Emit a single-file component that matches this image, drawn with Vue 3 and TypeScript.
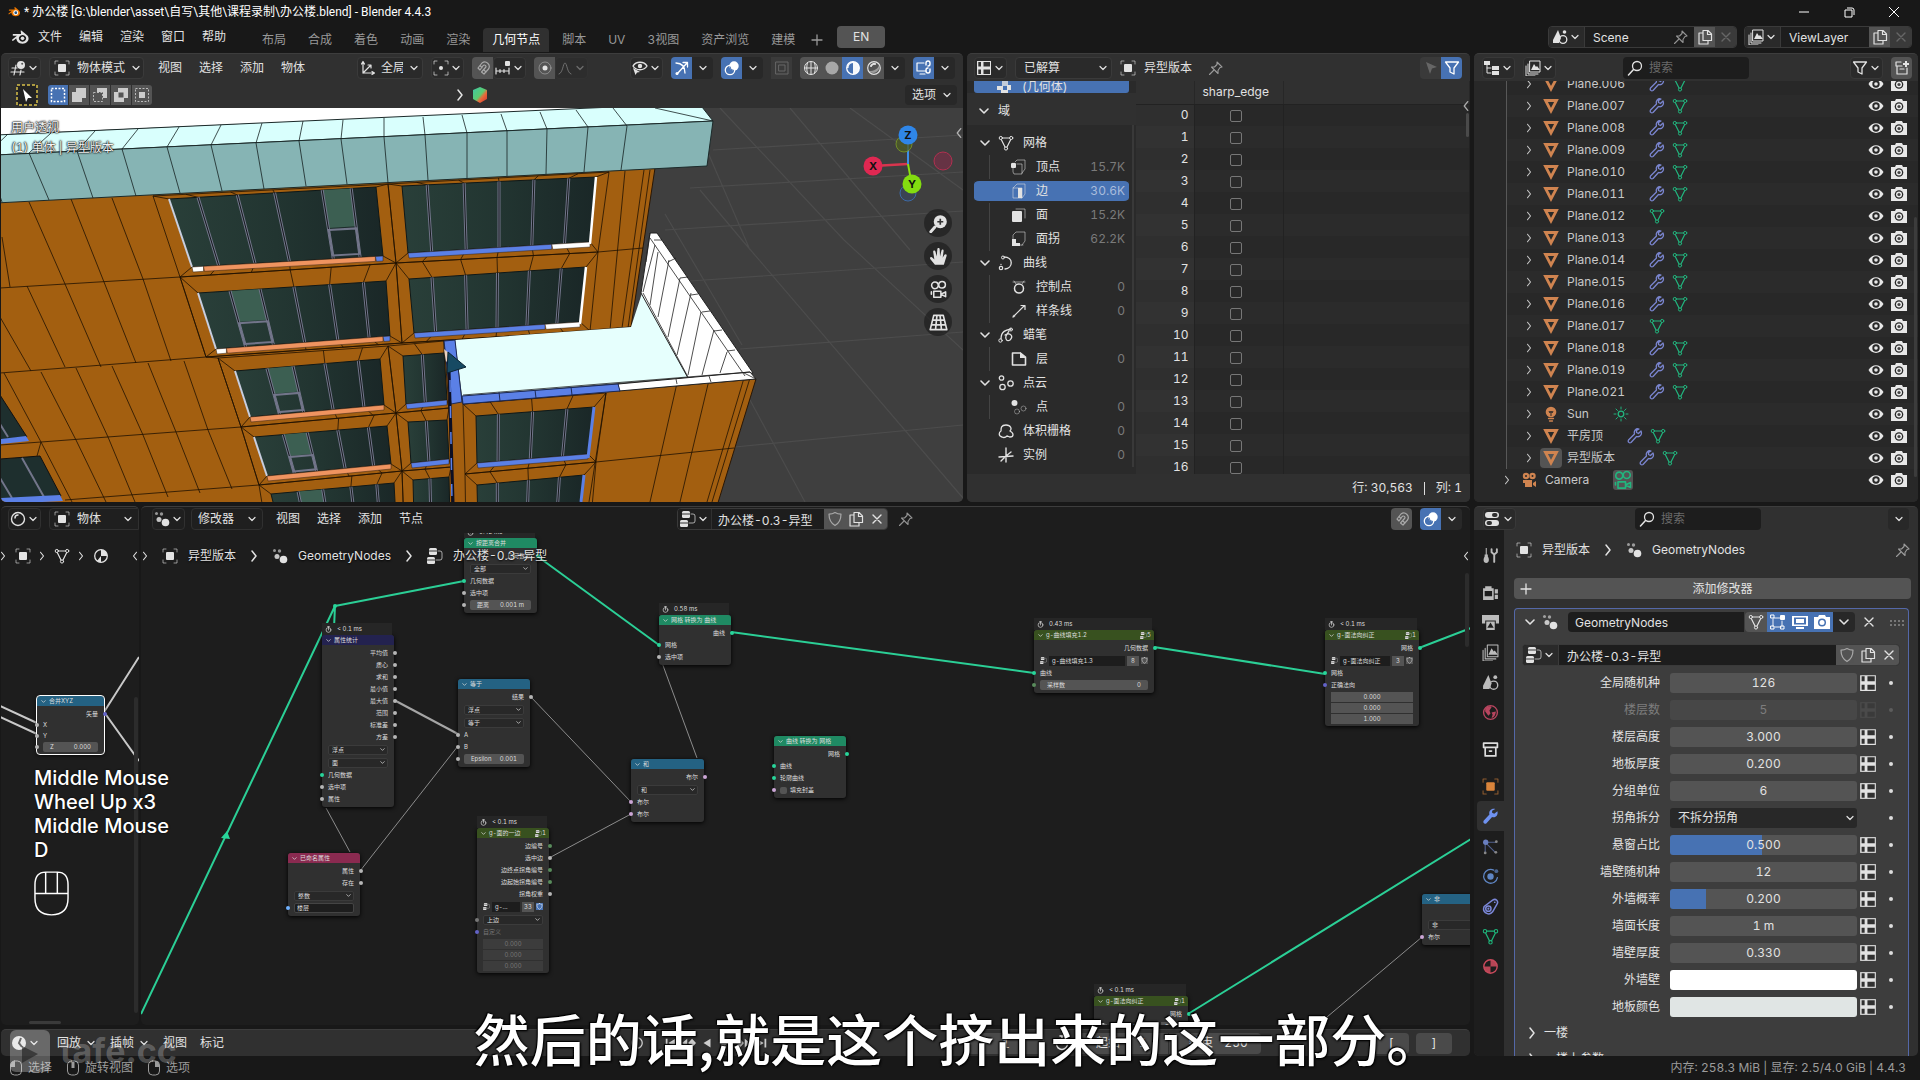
<script setup lang="ts">
import { h, ref } from 'vue'

const O = 'fill="none" stroke="currentColor" stroke-linecap="round" stroke-linejoin="round"'
const icons: Record<string, string> = {
  chev: `<path ${O} stroke-width="1.6" d="M4 6l4 4 4-4"/>`,
  right: `<path ${O} stroke-width="1.5" d="M6 3l4 5-4 5"/>`,
  left: `<path ${O} stroke-width="1.5" d="M10 3L6 8l4 5"/>`,
  x: `<path ${O} stroke-width="1.4" d="M4 4l8 8M12 4l-8 8"/>`,
  plus: `<path ${O} stroke-width="1.3" d="M8 3v10M3 8h10"/>`,
  blender: `<path fill="currentColor" fill-rule="evenodd" d="M8.600 1.600c.6-.4 1 0 1.500.4l4.600 3.900c3 3 .8 7.900-4.300 7.900-4 0-5.900-2.700-5.800-5L1.600 11C.8 11.500 0 10.600.8 9.900l4.300-3.500H1.900c-1.200 0-1-1.700.1-1.700H9zM10.300 5.600a3.400 3.200 0 1 0 .1 0z"/><circle cx="10.400" cy="8.800" r="1.700" fill="currentColor"/>`,
  view3d: `<path ${O} stroke-width="1.2" d="M2 8h5M1 12h13M6 5L4 15M11 10l-1 5"/><circle cx="11" cy="5" r="4" fill="currentColor"/><circle cx="12.200" cy="3.800" r="1" fill="#555"/>`,
  object: `<rect x="4" y="4" width="8" height="8" rx="1" fill="currentColor"/><path ${O} opacity=".6" d="M1 4V1h3M12 1h3v3M15 12v3h-3M4 15H1v-3"/>`,
  orient: `<path ${O} stroke-width="1.2" d="M3 2v11h11M1.500 4L3 1.500 4.500 4M12 11.500l2.500 1.500-2.500 1.500M3 13l7-7M8 5h3v3"/>`,
  pivot: `<circle cx="8" cy="8" r="2" fill="currentColor"/><path ${O} opacity=".7" d="M1 4V1h3M12 1h3v3M15 12v3h-3M4 15H1v-3"/>`,
  magnet: `<path ${O} stroke-width="1.2" d="M3 8l4-5a4.500 4.500 0 0 1 6.500 6L9 14l-2.500-2 4-4.500a1.500 1.500 0 0 0-2.300-2L5 10zM5 5.500L7 7.500M9 10l2 2"/>`,
  snapinc: `<path ${O} stroke-width="1.200" d="M1 8v6M5 9.500v3M9 9.500v3M14 8v6M1 11h13"/><rect x="10" y="1" width="5" height="5" rx="1" fill="currentColor"/>`,
  prop: `<circle cx="8" cy="8" r="6" ${O} opacity=".4"/><circle cx="8" cy="8" r="2.500" fill="currentColor"/>`,
  falloff: `<path ${O} d="M2 14C6 13 6 3 8 3s2 10 6 11"/>`,
  eyeptr: `<path ${O} stroke-width="1.400" d="M1 6c3-5 11-5 14 0-3 5-11 5-14 0z"/><circle cx="8" cy="6" r="2.200" fill="currentColor"/><path fill="currentColor" d="M1 8l7 4-3 .5L3.500 15z"/>`,
  gizmo: `<path ${O} stroke-width="1.300" d="M2 3c6 0 9 4 9 10M3 14L13 3M9 2.500l4.500 0 0 4.500"/><circle cx="3" cy="13.500" r="1.500" fill="currentColor"/>`,
  overlay: `<circle cx="10" cy="6" r="4.700" fill="currentColor"/><circle cx="6" cy="10" r="4.700" ${O} stroke-width="1.300"/><path fill="none" stroke="#4772b3" d="M6 6.500a4 4 0 0 0 4 4"/>`,
  xray: `<rect x="2" y="2" width="12" height="12" ${O}/><rect x="5" y="5" width="6" height="6" ${O}/>`,
  wire: `<circle cx="8" cy="8" r="6.500" ${O}/><path ${O} d="M8 1.500v13M1.500 8h13M4.500 2.500c-1 4-1 7 0 11M11.500 2.500c1 4 1 7 0 11"/>`,
  solid: `<circle cx="8" cy="8" r="6.500" fill="currentColor"/>`,
  mat: `<circle cx="8" cy="8" r="6.300" ${O} stroke-width="1.300"/><path fill="currentColor" d="M8 1.700a6.300 6.300 0 0 1 0 12.600V8H2A6.300 6.300 0 0 1 8 1.700z" opacity=".95"/><path fill="#4772b3" d="M8 8V3a5 5 0 0 0-4.500 5z"/>`,
  rend: `<circle cx="8" cy="8" r="6.300" ${O} stroke-width="1.200"/><path ${O} stroke-width="2" d="M5 6c1-2 3-2.500 4-2"/><path fill="currentColor" opacity=".5" d="M3 11a6 6 0 0 0 10-6c-1 4-5 6-10 6z"/>`,
  screen: `<path ${O} stroke-width="1.200" d="M8 3H1v8h9M4 14h5"/><path ${O} stroke-width="1.400" d="M10 5V3a2 2 0 0 1 4 0v1a2 2 0 0 1-2 2M14 9v2a2 2 0 0 1-4 0v-1a2 2 0 0 1 2-2"/>`,
  sheet: `<path fill="currentColor" d="M1 1h14v14H1z"/><path fill="#303030" d="M7.500 2H14v4.500H7.500zM2.300 2H5v4.500H2.300zM2.300 9.500H5V14H2.300zM7.500 9.500H14V14H7.500z"/>`,
  pin: `<path ${O} stroke-width="1.100" d="M9 2l5 5-2 .5-2 3 0 3-6.500-6.500 3 0 2.500-2.500zM5.500 10.500L1.500 14.500"/>`,
  pointer: `<path fill="currentColor" d="M3 2l11 5-5 1.500L7 14z"/>`,
  filter: `<path ${O} stroke-width="1.300" d="M1.500 2h13L10 8v6l-4-2V8z"/>`,
  outliner: `<path ${O} d="M3 4v9h4M3 8h4"/><rect x="0" y="1" width="6" height="4" fill="currentColor"/><rect x="8" y="6" width="7" height="4" fill="currentColor"/><rect x="8" y="11" width="7" height="4" fill="currentColor"/>`,
  layers: `<path ${O} d="M3 4v10h10M1 6v10h9"/><rect x="5" y="1" width="10" height="11" ${O} /><path fill="currentColor" d="M6 10l3-6 2 3 1-1 3 4z"/>`,
  search: `<circle cx="10" cy="6" r="4.500" ${O} stroke-width="1.300"/><path ${O} stroke-width="1.500" d="M6.500 9.500L1.500 15"/>`,
  newcol: `<path ${O} stroke-width="1.200" d="M7 2H2v4h6M3 6v8h10V8M6 9h4"/><path fill="currentColor" d="M11 1h2v2h2v2h-2v2h-2V5H9V3h2z"/>`,
  scene: `<path fill="currentColor" d="M6 1l3 8-2 5H1l0-3z"/><circle cx="11" cy="10.500" r="3.800" ${O} stroke-width="1.300"/><circle cx="12.500" cy="3" r="1.800" fill="currentColor"/>`,
  copy: `<path ${O} stroke-width="1.200" d="M6 1.500h5l3.500 3.500v6.500H6zM10.500 2v3.500H14M6 4H2v11h9v-3"/>`,
  shield: `<path ${O} stroke-width="1.200" d="M8 1.500c2 1.200 4 1.600 6 1.600 0 6-1.500 9-6 11.500C3.500 12 2 9 2 3.100c2 0 4-.4 6-1.600z"/>`,
  tri: `<path fill="none" stroke="currentColor" stroke-width="2.800" d="M2.500 2.500h11L8 13z"/>`,
  wrench: `<path ${O} stroke-width="1.300" d="M14 3l-2.500 2.500-2-1 0-2L12 1C9 0 6.500 3 7.500 6L1.500 12c-1 2 1 3.500 2.500 2.500l5.500-6C13 9.500 15.500 6.500 14 3z"/>`,
  wrenchfill: `<path fill="currentColor" d="M14.500 3l-3 2.500-2-1 0-2L12.500 1C9 0 6 3 7 6L1.500 12c-1 2 1 3.500 2.500 2.500l5.500-6C13 9.500 15.500 6.500 14.500 3z"/>`,
  mesh: `<path ${O} stroke-width="1.200" d="M4.500 3h7M3.500 5l3.500 7M12.500 5L9 12"/><circle cx="2.800" cy="3" r="1.600" ${O}/><circle cx="13.200" cy="3" r="1.600" ${O}/><circle cx="8" cy="13.500" r="1.600" ${O}/>`,
  bulb: `<circle cx="8" cy="6" r="5.300" fill="currentColor"/><path fill="none" stroke="#282828" d="M6 5l1 2 1-2 1 2 1-2M8 7v3"/><path ${O} stroke-width="1.300" d="M5.500 12.500h5M6.500 15h3"/>`,
  sun: `<circle cx="8" cy="8" r="2.800" ${O} stroke-width="1.300"/><path ${O} d="M8 1v2M8 13v2M1 8h2M13 8h2M3 3l1.500 1.500M11.500 11.500L13 13M13 3l-1.500 1.500M4.500 11.500L3 13"/>`,
  cam: `<circle cx="5" cy="4" r="3.200" fill="currentColor"/><circle cx="11.500" cy="4" r="3.200" fill="currentColor"/><path fill="currentColor" d="M2 8h9v7H4V11H2zM12 11l3-2v6l-3-2z"/><circle cx="5" cy="4" r="1" fill="#282828"/><circle cx="11.500" cy="4" r="1" fill="#282828"/>`,
  camo: `<circle cx="5" cy="4.500" r="2.800" ${O} stroke-width="1.300"/><circle cx="11" cy="4" r="2.800" ${O} stroke-width="1.300"/><path ${O} stroke-width="1.300" d="M4 9.500h6v5H4zM10 12l4-2v4zM2 10v2"/>`,
  eye: `<path fill="currentColor" d="M.5 8C4 1.500 12 1.500 15.500 8 12 14.500 4 14.500.5 8z"/><circle cx="8" cy="8" r="3.700" fill="#282828"/><circle cx="8" cy="8" r="1.800" fill="currentColor"/>`,
  photo: `<path fill="currentColor" d="M0 3h4l1-2h6l1 2h4v12H0z"/><circle cx="8" cy="8.500" r="4.300" fill="#282828"/><circle cx="8" cy="8.500" r="3" fill="currentColor"/><circle cx="8" cy="8.500" r="1.600" fill="#444"/>`,
  photoblue: `<path fill="currentColor" d="M0 3h4l1-2h6l1 2h4v12H0z"/><circle cx="8" cy="8.500" r="4" fill="#4772b3"/><circle cx="8" cy="8.500" r="2.500" fill="currentColor"/>`,
  tools: `<path fill="currentColor" d="M3.500 1h1v6h1v2c1.500 2 1.500 6-1.500 6s-3-4-1.500-6V7h1z"/><path ${O} stroke-width="1.800" d="M9 2v3l2.500 2L14 5V2M11.500 7v7"/>`,
  render: `<path fill="currentColor" d="M1 4h10v11H1zM3 2h6v2H3zM12 5h3v4h-3zM12 10h3v4h-3z"/><path fill="#1d1d1d" d="M2.500 6.500h7v5h-7z"/>`,
  output: `<path fill="currentColor" d="M0 1h16v8h-3V6H3v3H0z"/><path fill="currentColor" d="M4 7h8v8H4z"/><path fill="#1d1d1d" d="M5 13l3-5 3 5z"/>`,
  world: `<circle cx="8" cy="8" r="6.500" ${O} stroke-width="1.300"/><path fill="currentColor" d="M3 4c3-3 6-2 6-1L7 6l1 3-2 2-3-4zM9 8l4-1c0 3-2 6-4 6l1-3z"/>`,
  collection: `<path ${O} stroke-width="1.600" d="M1.500 2h13v4h-13zM3 6v8h10V6"/><path ${O} stroke-width="1.500" d="M7 9.500h2"/>`,
  particles: `<circle cx="3.500" cy="4" r="2.500" fill="currentColor"/><path ${O} opacity=".7" d="M4 4h9M4 5l8 8M3 6v7"/><circle cx="13.500" cy="3.500" r="1.300" fill="#888"/><circle cx="13" cy="13.500" r="1.300" fill="#888"/><circle cx="3" cy="14" r="1.300" fill="#888"/>`,
  physics: `<circle cx="8" cy="8" r="3" fill="currentColor"/><path ${O} stroke-width="1.200" d="M11 2a6.500 6.500 0 1 0 3.500 7"/><circle cx="13.500" cy="3" r="1.800" fill="currentColor" opacity=".7"/>`,
  constraint: `<path ${O} stroke-width="1.400" d="M2 8L10 2c3-2 6 1 4 4l-4 7c-3 4-9 1-8.500-3z"/><circle cx="6" cy="10" r="2.500" ${O} stroke-width="1.400"/><circle cx="6" cy="10" r="1" fill="currentColor"/><circle cx="12" cy="4" r=".8" fill="currentColor"/>`,
  material: `<circle cx="8" cy="8" r="6.300" ${O} stroke-width="1.300"/><path fill="currentColor" d="M8 8V1.700a6.300 6.300 0 0 1 6.300 6.300H8zM8 8v6.300A6.300 6.300 0 0 1 1.700 8z" opacity=".9"/>`,
  matball: `<circle cx="8" cy="8" r="6.300" ${O} stroke-width="1.300"/><path fill="currentColor" d="M8 1.700a6.300 6.300 0 0 1 6.300 6.300H8zM8 8v6.300A6.300 6.300 0 0 1 4 13z"/>`,
  shader: `<circle cx="8" cy="8" r="6.500" ${O} stroke-width="1.400"/><path ${O} stroke-width="1.500" d="M5 7c0-2 1-3 3-3"/>`,
  geo: `<circle cx="11.500" cy="11.500" r="3.800" fill="currentColor"/><circle cx="5" cy="8.500" r="2.500" fill="currentColor" opacity=".85"/><circle cx="7.500" cy="3" r="1.700" fill="currentColor" opacity=".6"/><circle cx="2.500" cy="2.500" r="1.500" fill="currentColor" opacity=".6"/>`,
  geoset: `<path fill="currentColor" opacity=".8" d="M6 0h6v7H6z"/><path fill="currentColor" d="M1 7h6v4H1zM5 11h7v3H5zM11 6h4v5h-4z"/>`,
  tree: `<rect x="2" y="0" width="8" height="7" rx="1.500" fill="currentColor"/><rect x="0" y="9" width="8" height="7" rx="1.500" fill="currentColor"/><path ${O} opacity=".7" d="M11 3h2q2 0 2 2v5q0 2-2 2H9"/><path stroke="#333" d="M2 3h8M0 12h8"/>`,
  props: `<rect x="0" y="1" width="14" height="6" rx="3" fill="currentColor"/><rect x="0" y="9" width="14" height="6" rx="3" fill="currentColor"/><rect x="7" y="2" width="5.500" height="4" rx="2" fill="#303030"/><rect x="1.500" y="10" width="5.500" height="4" rx="2" fill="#303030"/>`,
  vertex: `<path ${O} opacity=".55" d="M2 4v9l1 2h8V5H6M4 3l2-2h8v9l-3 4"/><rect x="0" y="4" width="5" height="5" rx="1" fill="currentColor"/>`,
  edge: `<path ${O} opacity=".55" d="M2 5v10h9V5H2l4-4h8v10l-3 4"/><rect x="7" y="5" width="4" height="10" fill="currentColor"/>`,
  face: `<path ${O} opacity=".55" d="M5 2h9v9"/><rect x="1" y="4" width="10" height="11" rx="1" fill="currentColor"/>`,
  corner: `<path ${O} opacity=".55" d="M2 8V4l3-3h9v9l-3 4M8 14h4"/><path fill="currentColor" d="M1 8h4v4h4v3H1z"/>`,
  curve: `<path ${O} stroke-width="1.300" d="M6 2c10 0 9 11 1 12M3 9.500v0"/><circle cx="5" cy="2.500" r="1.500" ${O}/><circle cx="3" cy="13" r="1.700" ${O} stroke-width="1.200"/>`,
  ctrl: `<circle cx="8" cy="9.500" r="4.500" ${O} stroke-width="1.500"/><path ${O} opacity=".6" d="M2 3h12M3 2l2 3M13 2l-2 3"/>`,
  spline: `<path ${O} stroke-width="1.200" d="M2 14L13 3M10 2.500h4v4M6 10h0"/><circle cx="3" cy="13" r="1.300" fill="currentColor" opacity=".6"/>`,
  gp: `<path ${O} stroke-width="1.300" d="M3 12C3 4 8 3 13 2M7 8c5-3 9 1 5 5-3 2-5-1-4-4l3-5"/><circle cx="2.500" cy="13.500" r="1.700" ${O}/><circle cx="13" cy="2.500" r="1.500" ${O}/>`,
  layer: `<path ${O} stroke-width="1.600" d="M1.500 2h8l5 4v8h-13z"/><path fill="currentColor" d="M9 1l6 6H9z"/>`,
  pcloud: `<circle cx="3.500" cy="3" r="2.200" ${O} stroke-width="1.300"/><circle cx="4.500" cy="12" r="2.700" ${O} stroke-width="1.300"/><circle cx="12.500" cy="8.500" r="2.700" ${O} stroke-width="1.300"/>`,
  point: `<circle cx="3.500" cy="4" r="3" fill="currentColor"/><circle cx="6" cy="12.500" r="2.500" ${O} opacity=".4"/><circle cx="12.500" cy="9.500" r="2.500" ${O} opacity=".4"/>`,
  volume: `<path ${O} stroke-width="1.300" d="M4 14c-4-1-3-5-1-6-0-3 0-6 5-6s6 4 4 6c4 2 4 6 0 6-1 0-2-1-3-1-1 1-3 2-5 1z"/>`,
  inst: `<path ${O} stroke-width="1.400" d="M8 1v14M1 10l14-1M8 9l5-4M8 9l-5 5"/>`,
  editmode: `<path ${O} opacity=".9" d="M3 5v7M5 13h6M12 7v5M4 4h6"/><rect x="10" y="1" width="5" height="5" rx="1" fill="currentColor"/><rect x="1" y="1" width="3" height="3" ${O}/><rect x="1" y="12" width="3" height="3" ${O}/><rect x="11" y="12" width="3" height="3" ${O}/>`,
  monitor: `<path fill="currentColor" d="M0 2h16v10H0zM4 13h8v2H4z"/><path fill="#4772b3" d="M2 3.500h12v7H2z"/><path fill="currentColor" d="M4 5h8v4H4z"/>`,
  clock: `<circle cx="8" cy="8" r="7" fill="currentColor"/><path fill="none" stroke="#303030" stroke-width="2" d="M10 3L8 8l3 4"/>`,
  stop: `<circle cx="8" cy="9" r="5.500" ${O} stroke-width="1.500"/><path ${O} stroke-width="1.500" d="M6 1h4M8 2v7"/>`,
  zoom: `<circle cx="9.500" cy="6.500" r="5.500" fill="currentColor"/><path fill="none" stroke="#333" stroke-width="1.400" d="M9.500 4v5M7 6.500h5"/><path ${O} stroke-width="2.400" d="M5 11l-3.500 4"/>`,
  hand: `<path fill="currentColor" d="M5 15L1 10c-.5-1.500 1-2 2-1l1.500 1.500L3.500 4c0-1.500 1.700-1.500 2 0L6.500 8 7 2c0-1.500 2-1.500 2 0l.3 6 1.200-5c.4-1.300 2-1 1.800.4L11.500 9l1.500-2.500c1-1 2.200-.3 1.800 1L12.500 15z"/>`,
  persp: `<path ${O} stroke-width="1.400" d="M4 2h8l3 12H1zM3 6h10M2 10h12M6.700 2L5.500 14M9.300 2l1.200 12"/>`,
  autokey: `<circle cx="8" cy="8" r="6" ${O} stroke-width="1.500"/>`,
  first: `<path fill="currentColor" d="M2 3h2v10H2zM13 3v10L5 8z"/>`,
  prevkey: `<path fill="currentColor" d="M6 3v10L0 8zM11.500 3L16 8l-4.500 5L7 8z"/>`,
  playback: `<path fill="currentColor" d="M12 3v10L4 8z"/>`,
  play: `<path fill="currentColor" d="M4 3v10l8-5z"/>`,
  nextkey: `<path fill="currentColor" d="M10 3v10l6-5zM4.500 3L0 8l4.500 5L9 8z"/>`,
  last: `<path fill="currentColor" d="M12 3h2v10h-2zM3 3v10l8-5z"/>`,
  mouseL: `<rect x="2.500" y="1" width="11" height="14" rx="4" ${O}/><path fill="currentColor" d="M3 7V4q0-3 4-3v6z"/>`,
  mouseM: `<rect x="2.500" y="1" width="11" height="14" rx="4" ${O}/><path fill="currentColor" d="M6.500 2h3v6h-3z"/>`,
  mouseR: `<rect x="2.500" y="1" width="11" height="14" rx="4" ${O}/><path fill="currentColor" d="M13 7V4q0-3-4-3v6z"/>`,
}
const Icon = (p: { name: string }) =>
  h('svg', { viewBox: '0 0 16 16', class: 'ico', 'aria-hidden': 'true', innerHTML: icons[p.name] })
Icon.props = ['name']

const menus = ['文件', '编辑', '渲染', '窗口', '帮助']
const tabs = ['布局', '合成', '着色', '动画', '渲染', '几何节点', '脚本', 'UV', '3视图', '资产浏览', '建模']
const activeTab = ref('几何节点')
const transport = ['autokey', 'first', 'prevkey', 'playback', 'play', 'nextkey', 'last']

/* ---------- 3D viewport ---------- */
type Pt = [number, number]
type Quad = [Pt, Pt, Pt, Pt]
interface Win { q: Quad; o?: Quad; m: number[]; c?: [number, number]; s: [string, number, number][]; edge?: string }
const BLUE = '#5b80e6', SAL = '#ef9460', WHT = '#fff'
const at = (q: Quad, u: number, v: number): Pt => {
  const t: Pt = [q[0][0] + (q[1][0] - q[0][0]) * u, q[0][1] + (q[1][1] - q[0][1]) * u]
  const b: Pt = [q[3][0] + (q[2][0] - q[3][0]) * u, q[3][1] + (q[2][1] - q[3][1]) * u]
  return [t[0] + (b[0] - t[0]) * v, t[1] + (b[1] - t[1]) * v]
}
const poly = (p: Pt[]) => 'M' + p.map(a => a[0].toFixed(1) + ' ' + a[1].toFixed(1)).join('L') + 'Z'
const line = (a: Pt, b: Pt) => `M${a[0].toFixed(1)} ${a[1].toFixed(1)}L${b[0].toFixed(1)} ${b[1].toFixed(1)}`
const sub = (q: Quad, u0: number, u1: number, v0: number, v1: number) => poly([at(q, u0, v0), at(q, u1, v0), at(q, u1, v1), at(q, u0, v1)])
const sillPath = (q: Quad, a: number, b: number) => {
  const p = at(q, a, 1), r = at(q, b, 1)
  return poly([p, r, [r[0], r[1] + 5], [p[0] + 1, p[1] + 5]])
}
const frameLines = (w: Win) => {
  if (!w.o) return ''
  const o = w.o
  let d = poly(o)
  const cs: Pt[] = [[0, 0], [1, 0], [1, 1], [0, 1]]
  cs.forEach(c => { d += line(at(o, c[0], c[1]), at(w.q, c[0], c[1])) })
  w.m.forEach(u => { d += line(at(o, u, 0), at(w.q, u, 0)) + line(at(w.q, u, 1), at(o, u, 1)) })
  return d
}
const mull = (w: Win) => w.m.concat(w.c ?? []).map(u => line(at(w.q, u, 0), at(w.q, u, 1))).join('')
const five = [.13, .32, .5, .68, .86]
const wins: Win[] = [
  { q: [[169, 199], [376, 187], [383, 256], [192, 267]], o: [[153, 196], [388, 184], [396, 263], [180, 277]], m: [.14, .33, .51], c: [.74, .88], s: [[WHT, 0, .06], [SAL, .06, .96], [BLUE, .96, 1]], edge: '#c9cede' },
  { q: [[402, 186], [596, 177], [590, 242], [408, 253]], o: [[388, 184], [609, 172], [598, 252], [396, 263]], m: five, s: [[BLUE, 0, .79], [WHT, .79, 1]] },
  { q: [[198, 293], [386, 281], [390, 336], [216, 349]], o: [[180, 277], [396, 263], [402, 343], [206, 357]], m: [.51, .7, .88], c: [.17, .33], s: [[WHT, 0, .06], [SAL, .06, .96], [BLUE, .96, 1]], edge: '#c9cede' },
  { q: [[409, 279], [586, 267], [580, 322], [414, 333]], o: [[396, 263], [598, 252], [590, 331], [402, 343]], m: five, s: [[BLUE, 0, .79], [WHT, .79, 1]] },
  { q: [[235, 371], [380, 359], [384, 405], [250, 417]], o: [[218, 358], [388, 346], [396, 413], [241, 427]], m: [.62, .85], c: [.22, .4], s: [[SAL, 0, 1]], edge: '#c9cede' },
  { q: [[403, 356], [444, 353], [447, 400], [406, 404]], o: [[388, 346], [444, 341], [449, 408], [396, 413]], m: [.47], s: [[BLUE, 0, 1]] },
  { q: [[254, 437], [387, 426], [391, 464], [267, 476]], o: [[241, 427], [396, 413], [402, 471], [259, 485]], m: [.63, .86], c: [.22, .4], s: [[SAL, 0, 1]], edge: '#c9cede' },
  { q: [[408, 422], [447, 420], [449, 459], [411, 463]], o: [[396, 413], [449, 408], [451, 467], [402, 471]], m: [.47], s: [[BLUE, 0, 1]] },
  { q: [[476, 416], [594, 407], [588, 454], [477, 463]], o: [[463, 404], [606, 393], [596, 462], [465, 474]], m: [.19, .48, .77], s: [[BLUE, 0, 1]] },
  { q: [[271, 494], [394, 483], [396, 520], [280, 530]], o: [[259, 485], [402, 471], [404, 525], [268, 540]], m: [.65, .86], c: [.22, .42], s: [] },
  { q: [[413, 480], [449, 477], [450, 520], [414, 520]], o: [[402, 471], [451, 467], [452, 530], [404, 530]], m: [.47], s: [] },
  { q: [[477, 485], [584, 475], [580, 520], [478, 525]], o: [[465, 474], [596, 462], [590, 530], [466, 535]], m: [.19, .48, .77], s: [] },
]
const roofTop: Pt[] = [[8, 134], [51, 133], [95, 131], [138, 129], [179, 127], [221, 125], [262, 123], [303, 121], [343, 120], [384, 118], [423, 117], [462, 115], [501, 114], [540, 112], [576, 110], [613, 108]]
const roofMid: Pt[] = [[-14, 155], [29, 153], [77, 151], [122, 149], [167, 147], [211, 145], [256, 143], [299, 141], [341, 139], [384, 137], [425, 135], [467, 133], [507, 131], [547, 129], [588, 127], [627, 126]]
const roofLow: Pt[] = [[2, 202], [49, 200], [93, 198], [136, 196], [180, 193], [222, 191], [264, 189], [306, 186], [347, 184], [388, 183], [428, 180], [467, 178], [507, 176], [546, 174], [584, 172], [621, 170]]
const roofLines = roofTop.map((p, i) => line(p, roofMid[i]) + line(roofMid[i], roofLow[i])).join('')
const wallLines = 'M2 237L10 287M29 202L65 284M71 199L104 282M112 198L143 279M0 288L180 277M27 286L65 367M65 284L101 367M104 282L136 363M143 279L171 361M180 277L206 357M0 317L31 371M0 373L206 357L218 358M4 373L41 442L72 502M41 372L76 440L106 502M76 368L108 437L135 502M112 366L143 435L168 497M148 363L176 432L200 493M184 361L208 430L232 489M218 358L241 427L259 485M41 442L241 427M65 500L259 485M41 442L37 456M0 445L41 442M598 252L643 248M625 171L610 330M644 170L622 328M650 170L628 328M606 393L589 502M596 462L734 448M677 383L650 502M709 380L680 502M744 378L707 502M750 378L712 502M465 345L445 346M206 357L402 343L590 331L631 327'
const slats = 'M658 252L650 305M669 260L658 317M680 278L668 337M691 293L677 355M701 312L688 375M714 330L702 375M727 352L720 373M650 238L745 376M654 240L662 240M668 262L676 258M680 278L688 277M691 295L698 294M702 312L710 311M714 331L722 330M727 351L735 350M650 233L646 262M655 245L643 292M463 395L750 372M643 293L688 377'

/* ---------- spreadsheet ---------- */
interface Dom { d: number; i: string; t: string; n?: string; sel?: boolean; open?: boolean }
const domains: Dom[] = [
  { d: 0, i: 'mesh', t: '网格', open: true }, { d: 1, i: 'vertex', t: '顶点', n: '15.7K' }, { d: 1, i: 'edge', t: '边', n: '30.6K', sel: true },
  { d: 1, i: 'face', t: '面', n: '15.2K' }, { d: 1, i: 'corner', t: '面拐', n: '62.2K' },
  { d: 0, i: 'curve', t: '曲线', open: true }, { d: 1, i: 'ctrl', t: '控制点', n: '0' }, { d: 1, i: 'spline', t: '样条线', n: '0' },
  { d: 0, i: 'gp', t: '蜡笔', open: true }, { d: 1, i: 'layer', t: '层', n: '0' },
  { d: 0, i: 'pcloud', t: '点云', open: true }, { d: 1, i: 'point', t: '点', n: '0' },
  { d: 0, i: 'volume', t: '体积栅格', n: '0' }, { d: 0, i: 'inst', t: '实例', n: '0' },
]
const rows = Array.from({ length: 17 }, (_, i) => i)

/* ---------- outliner ---------- */
interface Obj { t: string; i: string; e: string[]; cls?: string }
const planes = ['006', '007', '008', '009', '010', '011', '012', '013', '014', '015', '016', '017', '018', '019', '021']
const objects: Obj[] = [
  ...planes.map(n => ({ t: 'Plane.' + n, i: 'tri', e: n === '012' || n === '017' ? ['mesh'] : ['wrench', 'mesh'] })),
  { t: 'Sun', i: 'bulb', e: ['sun'] },
  { t: '平房顶', i: 'tri', e: ['wrench', 'mesh'] },
  { t: '异型版本', i: 'tri', e: ['wrench', 'mesh'], cls: 'active' },
  { t: 'Camera', i: 'cam', e: ['camo'], cls: 'root' },
]

/* ---------- properties ---------- */
const ptabs = [
  { i: 'tools', c: '#bbb', g: 1 }, { i: 'render', c: '#bbb' }, { i: 'output', c: '#bbb' }, { i: 'layers', c: '#bbb' }, { i: 'scene', c: '#bbb' }, { i: 'world', c: '#b8455f', g: 1 },
  { i: 'collection', c: '#ddd', g: 1 }, { i: 'object', c: '#d9843b' }, { i: 'wrenchfill', c: '#6f92f0', a: 1 }, { i: 'particles', c: '#6a7fc0' },
  { i: 'physics', c: '#5f86c4' }, { i: 'constraint', c: '#7b87d8' }, { i: 'mesh', c: '#1fb57b' }, { i: 'material', c: '#c94a5c' },
]
interface Prop { l: string; v: string; k?: 'choice' | 'colour' | 'muted'; f?: number }
const propRows: Prop[] = [
  { l: '全局随机种', v: '126' }, { l: '楼层数', v: '5', k: 'muted' }, { l: '楼层高度', v: '3.000' }, { l: '地板厚度', v: '0.200' },
  { l: '分组单位', v: '6' }, { l: '拐角拆分', v: '不拆分拐角', k: 'choice' }, { l: '悬窗占比', v: '0.500', f: 49 }, { l: '墙壁随机种', v: '12' },
  { l: '外墙概率', v: '0.200', f: 19 }, { l: '墙面长度', v: '1 m' }, { l: '墙壁厚度', v: '0.330' }, { l: '外墙壁', v: '#ffffff', k: 'colour' }, { l: '地板颜色', v: '#e0e5e4', k: 'colour' },
]
const fill = (p: Prop) => (p.f ? { background: `linear-gradient(90deg,#4772b3 ${p.f}%,#545454 ${p.f}%)` } : {})

/* ---------- node editor ---------- */
interface Row { k: 'out' | 'in' | 'pick' | 'num' | 'group' | 'vec' | 'chk' | 'txt'; t: string; v?: string; s?: string; dim?: boolean }
interface NodeT { x: number; y: number; w: number; t: string; c: string; ms?: string; g?: string; r: Row[]; sel?: boolean }
const G = '#28d59a', F = '#b5b5b5', V = '#6363c7', B = '#cca6d6'
const TEAL = '#1f8a63', MATH = '#246283', GRP = '#38511f'
const out = (t: string, s = F): Row => ({ k: 'out', t, s })
const inp = (t: string, s = F): Row => ({ k: 'in', t, s })
const pick = (t: string): Row => ({ k: 'pick', t })
const view = { x: 141, y: 506 }
const nodes: NodeT[] = [
  { x: 464, y: 538, w: 73, t: '按距离合并', c: TEAL, ms: '0.42 ms', r: [out('几何数据', G), pick('全部'), inp('几何数据', G), inp('选中项'), { k: 'num', t: '距离', v: '0.001 m', s: F }] },
  { x: 322, y: 635, w: 72, t: '属性统计', c: '#23224f', ms: '< 0.1 ms', r: ['平均值', '质心', '求和', '最小值', '最大值', '范围', '标准差', '方差'].map(t => out(t)).concat([pick('浮点'), pick('面'), inp('几何数据', G), inp('选中项'), inp('属性')]) },
  { x: 458, y: 679, w: 72, t: '等于', c: MATH, r: [out('结果'), pick('浮点'), pick('等于'), inp('A'), inp('B'), { k: 'num', t: 'Epsilon', v: '0.001', s: F }] },
  { x: 288, y: 853, w: 72, t: '已命名属性', c: '#8a2a50', r: [out('属性'), out('存在'), pick('整数'), { k: 'txt', t: '楼层', s: '#70b2ff' }] },
  { x: 477, y: 828, w: 72, t: 'g-面的一边', c: GRP, ms: '< 0.1 ms', g: '1', r: [out('边编号', '#598c5c'), out('选中边'), out('边终点拐角编号', '#598c5c'), out('边起始拐角编号', '#598c5c'), out('拐角权重'), { k: 'group', t: 'g-…', v: '33', s: '' }, { k: 'pick', t: '上边', s: '#777' }, { k: 'in', t: '自定义', s: V, dim: true }, { k: 'vec', t: '0.000', dim: true }, { k: 'vec', t: '0.000', dim: true }, { k: 'vec', t: '0.000', dim: true }] },
  { x: 631, y: 759, w: 73, t: '和', c: MATH, r: [out('布尔', B), pick('和'), inp('布尔', B), inp('布尔', B)] },
  { x: 659, y: 615, w: 72, t: '网格 转换为 曲线', c: TEAL, ms: '0.58 ms', r: [out('曲线', G), inp('网格', G), inp('选中项')] },
  { x: 774, y: 736, w: 72, t: '曲线 转换为 网格', c: TEAL, r: [out('网格', G), inp('曲线', G), inp('轮廓曲线', G), { k: 'chk', t: '填充封盖', s: B }] },
  { x: 1034, y: 630, w: 120, t: 'g-曲线填充1.2', c: GRP, ms: '0.43 ms', g: '5', r: [out('几何数据', G), { k: 'group', t: 'g-曲线填充1.3', v: '8' }, inp('曲线', G), { k: 'num', t: '采样数', v: '0', s: '#598c5c' }] },
  { x: 1325, y: 630, w: 94, t: 'g-面法向纠正', c: GRP, ms: '< 0.1 ms', g: '1', r: [out('网格', G), { k: 'group', t: 'g-面法向纠正', v: '3' }, inp('网格', G), inp('正确法向', V), { k: 'vec', t: '0.000' }, { k: 'vec', t: '0.000' }, { k: 'vec', t: '1.000' }] },
  { x: 1422, y: 894, w: 72, t: '非', c: MATH, r: [out('布尔', B), pick('非'), inp('布尔', B)] },
  { x: 1094, y: 996, w: 94, t: 'g-面法向纠正', c: GRP, ms: '< 0.1 ms', g: '1', r: [out('网格', G), { k: 'group', t: 'g-面法向纠正', v: '3' }] },
]
const mini: NodeT[] = [{ x: 37, y: 696, w: 67, t: '合并XYZ', c: MATH, sel: true, r: [out('矢量', V), inp('X'), inp('Y'), { k: 'num', t: 'Z', v: '0.000', s: F }] }]
const editors = [{ id: 'mini', v: { x: 1, y: 506 }, n: mini }, { id: 'main', v: view, n: nodes }]
const green = 'M335 606L464 581M335 606L141 1014M335 606L334 628M537 556L659 645M731 632L1034 673M1154 647L1325 674M1419 648L1471 628M1188 1014L1471 839'
const gray = 'M394 700L458 734M360 871L458 746M530 696L631 802M549 858L631 814M326 808L350 852M661 660L697 758M1327 1017L1422 937'
</script>

<template>
  <div class="app">
    <header class="title">
      <svg class="logo" viewBox="0 0 16 16" aria-hidden="true"><path fill="#ea7600" d="M8.600 1.600c.6-.4 1 0 1.500.4l4.600 3.900c3 3 .8 7.900-4.300 7.900-4 0-5.900-2.700-5.800-5L1.600 11C.8 11.500 0 10.600.8 9.900l4.300-3.500H1.900c-1.200 0-1-1.700.1-1.700H9z" /><circle cx="10.300" cy="9" r="3.300" fill="#fff" /><circle cx="10.400" cy="9" r="1.900" fill="#265787" /></svg>
      <span>* 办公楼 [G:\blender\asset\自写\其他\课程录制\办公楼.blend] - Blender 4.4.3</span>
      <div class="wc">
        <button aria-label="最小化"><svg viewBox="0 0 12 12"><path d="M1 6h10" /></svg></button>
        <button aria-label="还原"><svg viewBox="0 0 12 12"><path d="M2 4h7v7H2zM4 2h5q2 0 2 2v5" /></svg></button>
        <button aria-label="关闭"><svg viewBox="0 0 12 12"><path d="M1 1l10 10M11 1L1 11" /></svg></button>
      </div>
    </header>

    <nav class="top">
      <button class="plain logo2" aria-label="Blender"><Icon name="blender" /></button>
      <div class="menus"><button v-for="m in menus" :key="m" class="plain">{{ m }}</button></div>
      <div class="tabs">
        <button v-for="(t, i) in tabs" :key="i" :class="{ current: t === activeTab }" @click="activeTab = t">{{ t }}</button>
        <button class="add" aria-label="添加工作区"><Icon name="plus" /></button>
      </div>
      <button class="en">EN</button>
      <div class="idb scene">
        <button class="dd" aria-label="场景"><Icon name="scene" /><Icon name="chev" class="s" /></button>
        <input value="Scene" aria-label="场景名称"><Icon name="pin" class="dimi inpin" />
        <button class="t" aria-label="新建场景"><Icon name="copy" /></button><button class="t off" aria-label="删除场景"><Icon name="x" /></button>
      </div>
      <div class="idb vl">
        <button class="dd" aria-label="视图层"><Icon name="layers" /><Icon name="chev" class="s" /></button>
        <input value="ViewLayer" aria-label="视图层名称">
        <button class="t" aria-label="新建视图层"><Icon name="copy" /></button><button class="t off" aria-label="删除视图层"><Icon name="x" /></button>
      </div>
    </nav>

    <main>
      <div class="colL">
        <div class="rowT">
          <section class="area view3d">
            <div class="hd">
              <button class="dd ed" aria-label="编辑器类型"><Icon name="view3d" /><Icon name="chev" class="s" /></button>
              <label class="sel mode"><Icon name="object" /><select aria-label="模式"><option>物体模式</option></select><Icon name="chev" class="s" /></label>
              <div class="menus"><button v-for="m in ['视图', '选择', '添加', '物体']" :key="m" class="plain">{{ m }}</button></div>
              <label class="sel orient"><Icon name="orient" /><select aria-label="坐标系"><option>全局</option></select><Icon name="chev" class="s" /></label>
              <button class="dd" aria-label="轴心点"><Icon name="pivot" /><Icon name="chev" class="s" /></button>
              <div class="grp"><button class="t" aria-label="吸附"><Icon name="magnet" class="dimi" /></button><button class="dd" aria-label="吸附到"><Icon name="snapinc" /><Icon name="chev" class="s" /></button></div>
              <div class="grp"><button class="t" aria-label="衰减编辑"><Icon name="prop" /></button><button class="dd faint" aria-label="衰减"><Icon name="falloff" /><Icon name="chev" class="s" /></button></div>
              <div class="rightg">
                <button class="dd" aria-label="可见性"><Icon name="eyeptr" /><Icon name="chev" class="s" /></button>
                <div class="grp"><button class="t on" aria-label="显示控件"><Icon name="gizmo" /></button><button class="c" aria-label="控件"><Icon name="chev" class="s" /></button></div>
                <div class="grp"><button class="t on" aria-label="显示叠加层"><Icon name="overlay" /></button><button class="c" aria-label="叠加层"><Icon name="chev" class="s" /></button></div>
                <button class="t off" aria-label="透视模式"><Icon name="xray" /></button>
                <div class="grp"><button class="t" aria-label="线框"><Icon name="wire" /></button><button class="t" aria-label="实体"><Icon name="solid" class="dimi" /></button><button class="t on" aria-label="材质预览"><Icon name="mat" /></button><button class="t" aria-label="渲染"><Icon name="rend" /></button><button class="c" aria-label="着色方式"><Icon name="chev" class="s" /></button></div>
                <div class="grp"><button class="t on" aria-label="同步"><Icon name="screen" /></button><button class="c" aria-label="同步选项"><Icon name="chev" class="s" /></button></div>
              </div>
            </div>
            <div class="tool">
              <button class="ts" aria-label="框选工具"><svg viewBox="0 0 22 22"><rect x="1" y="1" width="20" height="20" fill="#222" stroke="#d8c04a" stroke-dasharray="3 2" stroke-width="1.500" /><path d="M7 5l9 9h-4l-2 4z" fill="#fff" /></svg></button>
              <div class="modes">
                <button class="chosen" aria-label="设置"><svg viewBox="0 0 16 16"><rect x="1.500" y="1.500" width="13" height="13" fill="none" stroke="#fff" stroke-dasharray="2 1.500" stroke-width="1.500" /></svg></button>
                <button aria-label="扩展"><svg viewBox="0 0 16 16"><path fill="#ccc" d="M5 1h10v10h-4v4H1V5h4z" /></svg></button>
                <button aria-label="减去"><svg viewBox="0 0 16 16"><path fill="#ccc" d="M5 1h10v10h-4V5H5z" /><rect x="1.500" y="5.500" width="9" height="9" fill="none" stroke="#bbb" stroke-dasharray="2 1.500" /></svg></button>
                <button aria-label="反转"><svg viewBox="0 0 16 16"><path fill="#ccc" fill-rule="evenodd" d="M5 1h10v10h-4v4H1V5h4zM5.500 5.500v5h5v-5z" /></svg></button>
                <button aria-label="交集"><svg viewBox="0 0 16 16"><rect x="5" y="5" width="6" height="6" fill="#ccc" /><rect x="1.500" y="1.500" width="13" height="13" fill="none" stroke="#bbb" stroke-dasharray="2 1.500" /></svg></button>
              </div>
              <div class="hex"><Icon name="right" /><svg class="hx" viewBox="0 0 18 18" aria-hidden="true"><defs><linearGradient id="hx" x1="0" y1="0" x2="1" y2="1"><stop offset="0" stop-color="#3ec7a5" /><stop offset=".5" stop-color="#5ccc70" /><stop offset=".65" stop-color="#e86b3a" /><stop offset="1" stop-color="#d12f2f" /></linearGradient></defs><path fill="url(#hx)" d="M9 1l7 3v9l-7 4-7-4V4z" /></svg></div>
              <button class="opt">选项<Icon name="chev" class="s" /></button>
            </div>
            <div class="canvas">
              <svg class="scene3d" viewBox="1 108 962 394" preserveAspectRatio="xMinYMin slice" role="img" aria-label="办公楼模型">
                <defs><linearGradient id="glass"><stop offset="0" stop-color="#293f39" /><stop offset=".5" stop-color="#223531" /><stop offset="1" stop-color="#1a2727" /></linearGradient></defs>
                <rect x="1" y="108" width="962" height="394" fill="#3f3f3f" />
                <path stroke="#4c4c4c" stroke-width="1.200" fill="none" d="M713 150L963 135M690 188L963 172M665 230L963 211M690 281L963 262M740 349L963 332M735 447L963 425M700 134L750 250M665 214L742 345M742 240L963 498M844 240L963 350M750 400L805 502M720 108L844 240M790 108L910 250M850 108L963 190M700 190L742 240" />
                <path fill="#a35f10" stroke="#2a1705" d="M-5 200L655 168L631 327L444 341L463 404L756 379L717 506L-5 506Z" />
                <path fill="#fff" d="M1 108H613L8 134L1 136Z" />
                <path fill="#d9fffd" stroke="#1c2a2a" d="M-4 135L613 107L702 107L713 121L-4 155Z" />
                <path fill="#86b4b4" stroke="#1c2a2a" d="M-4 155L713 121L707 166L-4 203Z" />
                <path class="wirel" stroke="#162222" :d="roofLines + 'M655 108L713 121'" />
                <path class="wirel" stroke="#201203" :d="wallLines" />
                <g v-for="(w, i) in wins" :key="i">
                  <path v-if="w.o" class="wirel" stroke="#201203" :d="frameLines(w)" />
                  <path fill="url(#glass)" stroke="#0f1818" :d="poly(w.q)" />
                  <path v-if="w.c" fill="#3c5f52" :d="sub(w.q, w.c[0], w.c[1], 0, .55)" />
                  <path fill="none" stroke="#72758a" stroke-width="3" :d="mull(w)" />
                  <path fill="none" stroke="#14181c" :d="mull(w)" />
                  <path v-if="w.c" fill="none" stroke="#72758a" stroke-width="2" :d="sub(w.q, w.c[0], w.c[1], .58, .95)" />
                  <path v-if="w.edge" fill="none" :stroke="w.edge" stroke-width="2" :d="line(w.q[0], w.q[3])" />
                  <path v-for="(s, j) in w.s" :key="j" :fill="s[0]" stroke="#332216" stroke-width=".5" :d="sillPath(w.q, s[1], s[2])" />
                </g>
                <path stroke="#fff" stroke-width="2.500" d="M596 177L590 244M586 267L580 324" />
                <path stroke="#5b80e6" stroke-width="3" d="M594 407L588 458M584 475L581 502" />
                <path fill="#1e2f2e" stroke="#111" d="M0 395L27 437L0 440ZM0 459L40 456L61 496L0 499Z" />
                <path stroke="#72758a" stroke-width="2" d="M0 424L8 437M22 458L44 497M0 478L12 498" />
                <path fill="#5b80e6" d="M0 439L26 436L29 441L0 444ZM0 498L60 495L63 501L0 504Z" />
                <path fill="#e6fffd" d="M455 340L631 327L643 290L690 377L462 396Z" />
                <path fill="#fff" stroke="#222" d="M641 293L650 233L657 233L753 373L688 378Z" />
                <path fill="#fff" stroke="#222" d="M618 384L750 372L756 379L619 391Z" />
                <path class="wirel" stroke="#222" :d="slats + 'M676 379L677 384M709 376L711 382M744 373L756 379'" />
                <path fill="#5b80e6" stroke="#1d2a55" d="M462 396L618 384L620 391L463 404ZM444 341L455 340L462 402L451 404Z" />
                <path stroke="#1d2a55" d="M499 392L500 401M535 390L536 398M571 387L572 395" />
                <path stroke="#0c0f24" stroke-width="3" d="M449 370L453 502" /><path stroke="#5b80e6" stroke-width="1.500" stroke-dasharray="12 14" d="M450 380L452 502" />
                <path fill="#e9d3c0" d="M444 349L452 356L446 362Z" /><path fill="#174a63" stroke="#0c2230" d="M448 352L466 367L447 373Z" />
                <g>
                  <path stroke="#ff3352" stroke-width="2.500" d="M873 166L908 164" opacity=".8" /><path stroke="#8be10f" stroke-width="2" d="M908 164L911 180" /><path stroke="#3d8ee8" stroke-width="2" d="M908 164V135" />
                  <circle cx="904" cy="144" r="8" fill="#4c5a26" stroke="#7fa023" opacity=".8" /><circle cx="908" cy="193" r="8" fill="#3a4453" stroke="#3d6aa5" /><circle cx="943" cy="161" r="9" fill="#663344" stroke="#b23050" />
                  <circle cx="908" cy="135" r="9.500" fill="#2f86e8" /><circle cx="873" cy="166" r="9.500" fill="#e02852" /><circle cx="912" cy="184" r="9.500" fill="#83dd10" />
                  <g class="axis"><text x="908" y="139">Z</text><text x="873" y="170">X</text><text x="912" y="188">Y</text></g>
                </g>
              </svg>
              <div class="vtext"><span>用户透视</span><span>(1) 单体 | 异型版本</span></div>
              <div class="nav"><button v-for="n in ['zoom', 'hand', 'camo', 'persp']" :key="n" :aria-label="n"><Icon :name="n" /></button></div>
              <Icon name="left" class="fold" />
            </div>
          </section>

          <section class="area spread">
            <div class="hd">
              <button class="dd ed" aria-label="编辑器类型"><Icon name="sheet" /><Icon name="chev" class="s" /></button>
              <label class="sel solved"><select aria-label="状态"><option>已解算</option></select><Icon name="chev" class="s" /></label>
              <Icon name="object" /><span class="nm">异型版本</span><Icon name="pin" class="dimi" />
              <div class="grp rightg"><button class="t off" aria-label="仅选中项"><Icon name="pointer" /></button><button class="t on" aria-label="过滤"><Icon name="filter" /></button></div>
            </div>
            <div class="sbody">
              <aside>
                <div class="geo"><Icon name="geoset" /><span>(几何体)</span></div>
                <div class="dom"><Icon name="chev" />域</div>
                <ul>
                  <li v-for="d in domains" :key="d.t" :class="{ picked: d.sel, sub: d.d }"><Icon v-if="!d.d" name="chev" :class="{ hid: !d.open }" /><Icon :name="d.i" /><span>{{ d.t }}</span><em>{{ d.n }}</em></li>
                </ul>
              </aside>
              <div class="sheet">
                <table>
                  <thead><tr><th></th><th>sharp_edge</th><th></th></tr></thead>
                  <tbody><tr v-for="r in rows" :key="r"><td>{{ r }}</td><td><input type="checkbox" :aria-label="'sharp_edge ' + r"></td><td></td></tr></tbody>
                </table>
                <Icon name="left" class="fold" /><i class="thumb"></i>
              </div>
            </div>
            <footer><span>行: 30,563</span><span class="bar"></span><span>列: 1</span></footer>
          </section>
        </div>

        <div class="rowN">
          <section v-for="e in editors" :key="e.id" class="area nodeed" :class="e.id">
            <div class="space">
              <svg v-if="e.id === 'main'" class="links" aria-hidden="true" viewBox="141 506 1330 519" preserveAspectRatio="xMinYMin slice">
                <path :d="gray" stroke="#8c8c8c" fill="none" /><path d="M394 700L458 734" stroke="#a5a5a5" stroke-width="2" />
                <path :d="green" stroke="#2bcf96" stroke-width="2" fill="none" /><circle cx="335" cy="606" r="2" fill="#28d59a" /><path fill="#28d59a" d="M227 831L221 838L230 839Z" />
              </svg>
              <svg v-else class="links" aria-hidden="true" viewBox="1 506 138 519" preserveAspectRatio="xMinYMin slice"><path fill="none" stroke="#c8c8c8" stroke-width="2" d="M0 706L37 723M0 717L37 734M104 712L139 657M104 712L139 761" /></svg>
              <div v-for="(n, i) in e.n" :key="i" class="node" :class="{ active: n.sel }" :style="{ left: n.x - e.v.x + 'px', top: n.y - e.v.y + 'px', width: n.w + 'px' }">
                <div v-if="n.ms" class="ms"><Icon name="stop" />{{ n.ms }}</div>
                <div class="nh" :style="{ background: n.c }"><Icon name="chev" />{{ n.t }}<span v-if="n.g" class="gb"><Icon name="tree" /><i>{{ n.g }}</i></span></div>
                <div v-for="(r, j) in n.r" :key="j" class="nr" :class="[r.k, { dim: r.dim }]">
                  <b v-if="r.s" class="sk" :style="{ background: r.s }"></b>
                  <template v-if="r.k === 'pick'"><select :aria-label="n.t"><option>{{ r.t }}</option></select><Icon name="chev" class="nc" /></template>
                  <template v-else-if="r.k === 'group'"><Icon name="tree" /><span class="gn">{{ r.t }}</span><span class="gu">{{ r.v }}</span><Icon name="shield" class="gs" :class="{ lit: r.v === '33' }" /></template>
                  <button v-else-if="r.k === 'num'" class="nf"><span>{{ r.t }}</span><span>{{ r.v }}</span></button>
                  <button v-else-if="r.k === 'vec'" class="nf mid">{{ r.t }}</button>
                  <input v-else-if="r.k === 'txt'" class="nt" :value="r.t" :aria-label="n.t">
                  <label v-else-if="r.k === 'chk'"><input type="checkbox">{{ r.t }}</label>
                  <span v-else>{{ r.t }}</span>
                </div>
              </div>
            </div>
            <template v-if="e.id === 'mini'">
              <div class="hd"><button class="dd ed" aria-label="编辑器类型"><Icon name="shader" /><Icon name="chev" class="s" /></button><label class="sel grow"><Icon name="object" /><select aria-label="着色器类型"><option>物体</option></select><Icon name="chev" class="s" /></label></div>
              <div class="crumb"><Icon name="right" class="s" /><Icon name="object" /><Icon name="right" class="s" /><Icon name="mesh" /><Icon name="right" class="s" /><Icon name="matball" /><Icon name="left" class="s" /></div>
              <i class="vbar"></i><i class="hbar"></i>
            </template>
            <template v-else>
              <div class="hd">
                <button class="dd ed" aria-label="编辑器类型"><Icon name="geo" /><Icon name="chev" class="s" /></button>
                <label class="sel modi"><select aria-label="节点类型"><option>修改器</option></select><Icon name="chev" class="s" /></label>
                <div class="menus"><button v-for="m in ['视图', '选择', '添加', '节点']" :key="m" class="plain">{{ m }}</button></div>
                <div class="idb tree"><button class="dd" aria-label="节点树"><Icon name="tree" /><Icon name="chev" class="s" /></button><input value="办公楼-0.3-异型" aria-label="节点树名称"><button class="t" aria-label="伪用户"><Icon name="shield" class="dimi" /></button><button class="t" aria-label="复制"><Icon name="copy" /></button><button class="t" aria-label="断开"><Icon name="x" /></button></div>
                <Icon name="pin" class="dimi" />
                <div class="rightg"><button class="t" aria-label="吸附"><Icon name="magnet" class="dimi" /></button><div class="grp"><button class="t on" aria-label="叠加层"><Icon name="overlay" /></button><button class="c" aria-label="叠加层选项"><Icon name="chev" class="s" /></button></div></div>
              </div>
              <div class="crumb"><Icon name="right" class="s" /><Icon name="object" /><span>异型版本</span><Icon name="right" /><Icon name="geo" /><span>GeometryNodes</span><Icon name="right" /><Icon name="tree" /><span>办公楼-0.3-异型</span><Icon name="left" class="s end" /></div>
              <i class="vbar short"></i>
            </template>
          </section>
        </div>

        <section class="area tl">
          <button class="dd" aria-label="时间线"><Icon name="clock" /><Icon name="chev" class="s" /></button>
          <button class="plain">回放<Icon name="chev" class="s" /></button><button class="plain">插帧<Icon name="chev" class="s" /></button><button class="plain">视图</button><button class="plain">标记</button>
          <div class="play"><button v-for="b in transport" :key="b" :aria-label="b"><Icon :name="b" /></button></div>
          <input class="fr" value="1" aria-label="当前帧"><Icon name="stop" />
          <label class="rng">起始<input value="1"></label><label class="rng e">结束<input value="250"></label>
          <button class="br b1">[</button><button class="br">]</button>
        </section>
      </div>

      <div class="colR">
        <section class="area outl">
          <div class="hd">
            <button class="dd" aria-label="编辑器类型"><Icon name="outliner" /><Icon name="chev" class="s" /></button><button class="dd" aria-label="显示模式"><Icon name="layers" /><Icon name="chev" class="s" /></button>
            <label class="find"><Icon name="search" /><input placeholder="搜索" aria-label="搜索"></label>
            <button class="dd f" aria-label="过滤"><Icon name="filter" /><Icon name="chev" class="s" /></button><button class="t" aria-label="新建集合"><Icon name="newcol" /></button>
          </div>
          <div class="olwrap">
            <ul>
              <li v-for="o in objects" :key="o.t" :class="o.cls"><Icon name="right" class="s" /><span class="oi"><Icon :name="o.i" /></span><span class="oname">{{ o.t }}</span><Icon v-for="x in o.e" :key="x" :name="x" :class="'e-' + x" /><span class="vis"><Icon name="eye" /><Icon name="photo" /></span></li>
            </ul>
            <i class="thumb low"></i>
          </div>
        </section>

        <section class="area prop">
          <div class="hd"><button class="dd" aria-label="编辑器类型"><Icon name="props" /><Icon name="chev" class="s" /></button><label class="find"><Icon name="search" /><input placeholder="搜索" aria-label="搜索属性"></label><button class="c last" aria-label="选项"><Icon name="chev" class="s" /></button></div>
          <div class="pb">
            <div class="pt"><button v-for="p in ptabs" :key="p.i" :class="{ current: p.a, g: p.g }" :style="{ color: p.c }" :aria-label="p.i"><Icon :name="p.i" /></button></div>
            <div class="pc">
              <div class="pcr"><Icon name="object" /><span>异型版本</span><Icon name="right" /><Icon name="geo" /><span>GeometryNodes</span><Icon name="pin" class="dimi end" /></div>
              <button class="addm"><Icon name="plus" /><span>添加修改器</span></button>
              <div class="panel">
                <div class="mh"><Icon name="chev" /><Icon name="geo" /><input value="GeometryNodes" aria-label="修改器名称"><div class="grp"><button class="t" aria-label="笼架"><Icon name="mesh" /></button><button class="t on" aria-label="编辑模式"><Icon name="editmode" /></button><button class="t on" aria-label="实时"><Icon name="monitor" /></button><button class="t on" aria-label="渲染"><Icon name="photoblue" /></button><button class="c" aria-label="更多"><Icon name="chev" /></button></div><button class="plain" aria-label="移除"><Icon name="x" /></button><span class="drag"></span></div>
                <div class="idb nt2"><button class="dd" aria-label="节点组"><Icon name="tree" /><Icon name="chev" class="s" /></button><input value="办公楼-0.3-异型" aria-label="节点组名称"><button class="t" aria-label="伪用户"><Icon name="shield" class="dimi" /></button><button class="t" aria-label="复制"><Icon name="copy" /></button><button class="t" aria-label="断开"><Icon name="x" /></button></div>
                <div v-for="p in propRows" :key="p.l" class="pr" :class="p.k">
                  <label :for="p.l">{{ p.l }}</label>
                  <span v-if="p.k === 'choice'" class="psel"><select :id="p.l"><option>{{ p.v }}</option></select><Icon name="chev" class="s" /></span>
                  <input v-else-if="p.k === 'colour'" :id="p.l" type="color" :value="p.v">
                  <input v-else :id="p.l" :value="p.v" :style="fill(p)" :disabled="p.k === 'muted'">
                  <button v-if="p.k !== 'choice'" class="plain" aria-label="属性切换"><Icon name="sheet" /></button><span v-else class="ph"></span><i class="dot"></i>
                </div>
                <button class="subp"><Icon name="right" />一楼</button>
                <button class="subp"><Icon name="right" />一楼上参数</button>
              </div>
            </div>
          </div>
        </section>
      </div>
    </main>

    <footer class="status">
      <span><Icon name="mouseL" />选择</span><span><Icon name="mouseM" />旋转视图</span><span><Icon name="mouseR" />选项</span>
      <span class="mem">内存: 258.3 MiB | 显存: 2.5/4.0 GiB | 4.4.3</span>
    </footer>

    <div class="mark"><svg viewBox="0 0 40 42" aria-hidden="true"><rect width="40" height="42" rx="6" fill="#fff" opacity=".28" /><path d="M12 16l16 8-16 9z" fill="#1d1d1d" opacity=".6" /></svg><span>tafe.cc</span></div>
    <div class="keys"><p>Middle Mouse</p><p>Wheel Up x3</p><p>Middle Mouse</p><p>D</p><svg viewBox="0 0 36 46" aria-hidden="true"><path fill="none" stroke="#fff" stroke-width="1.500" d="M1 14Q1 1 12 1H24Q35 1 35 14V28Q35 45 18 45T1 28ZM1 23H35M12 1V23M24 1V23" /></svg></div>
    <p class="subtitle">然后的话,就是这个挤出来的这一部分。</p>
  </div>
</template>

<style>
html, body { margin: 0; background: #181818; overflow: hidden; }
svg.ico { width: 16px; height: 16px; flex: none; display: block; }
</style>

<style scoped>
.app { height: 100vh; display: flex; flex-direction: column; position: relative; background: #181818; color: #e2e2e2; font: 12px/16px Inter, "Noto Sans CJK SC", sans-serif; font-variant-numeric: tabular-nums; overflow: hidden; }
.app * { box-sizing: border-box; }
button, input, select { font: inherit; font-variant-numeric: tabular-nums; color: inherit; border: 0; padding: 0; margin: 0; background: none; outline: 0; min-width: 0; }
select { appearance: none; }
button { display: flex; align-items: center; justify-content: center; white-space: nowrap; }
ul { list-style: none; margin: 0; padding: 0; }
p { margin: 0; }
.s.ico { width: 12px; height: 12px; }
.dimi { opacity: .6; }
.title { height: 22px; flex: none; display: flex; align-items: center; padding: 2px 14px 0 8px; font: 12px/18px Roboto, "Noto Sans CJK SC", sans-serif; color: #fff; gap: 4px; }
.logo { width: 12px; height: 14px; }
.wc { margin-left: auto; display: flex; gap: 33px; padding-right: 6px; }
.wc svg { width: 12px; height: 12px; fill: none; stroke: #fff; }
.top { height: 31px; flex: none; display: flex; align-items: center; padding: 0 8px 1px 10px; }
.logo2 .ico { width: 20px; height: 17px; }
.menus { display: flex; gap: 17px; margin-left: 14px; }
.top > .menus { margin-left: 8px; }
.tabs { display: flex; align-self: flex-end; margin-left: 25px; color: #999; }
.tabs button { height: 24px; padding: 0 11px; border-radius: 4px 4px 0 0; }
.tabs .current { background: #303030; color: #fff; padding: 0 9px; margin: 0 2px; }
.tabs .add { padding: 0 3px; }
.en { width: 48px; height: 22px; background: #545454; border-radius: 4px; margin-left: 9px; }
.idb { display: flex; height: 22px; background: #1d1d1d; border-radius: 4px; border: 1px solid #3a3a3a; overflow: hidden; align-items: center; }
.idb input { flex: 1; padding-left: 8px; height: 20px; }
.scene { width: 189px; margin-left: auto; }
.vl { width: 168px; margin-left: 7px; }
.inpin { margin-right: 5px; }
.idb .dd { width: 36px; height: 20px; border: 0; border-right: 1px solid #3a3a3a; border-radius: 0; }
.t { width: 21px; height: 22px; background: #545454; flex: none; }
.t.on { background: #4772b3; color: #fff; }
.t.off { background: #3a3a3a; color: #666; }
.c { width: 21px; height: 22px; background: #282828; }
.dd { height: 22px; min-width: 33px; background: #2a2a2a; border: 1px solid #383838; border-radius: 4px; gap: 1px; flex: none; }
.faint { opacity: .35; }
.grp { display: flex; border-radius: 4px; overflow: hidden; flex: none; }
.sel { position: relative; display: flex; align-items: center; height: 22px; background: #2a2a2a; border: 1px solid #3a3a3a; border-radius: 4px; padding: 0 4px; gap: 7px; flex: none; }
.sel select { flex: 1; }
.mode { width: 95px; }
.mode select { flex: none; width: 50px; }
.mode .s { margin-left: -4px; }
.solved .s { margin-right: -2px; }
.orient { width: 66px; margin-left: 44px; padding: 0 2px; gap: 5px; }
.solved { width: 97px; padding-left: 8px; }

main { flex: 1; min-height: 0; display: grid; grid-template-columns: minmax(0, 1fr) 444px; gap: 4px; padding: 0 2px 0 1px; }
.colL, .colR { display: flex; flex-direction: column; gap: 4px; min-width: 0; min-height: 0; }
.rowT { display: grid; grid-template-columns: minmax(0, 1fr) 503px; gap: 4px; height: 449px; flex: none; }
.rowN { flex: 1; min-height: 0; display: grid; grid-template-columns: 138px minmax(0, 1fr); gap: 2px; }
.area { background: #303030; border-radius: 5px; overflow: hidden; display: flex; flex-direction: column; position: relative; min-height: 0; border-top: 1px solid #3d3d3d; }
.hd { height: 27px; flex: none; display: flex; align-items: center; gap: 8px; padding: 0 8px 0 7px; }
.view3d .hd .menus { margin-left: 6px; }
.rightg { margin-left: auto; display: flex; gap: 8px; }
.spread .rightg { gap: 0; }
.tool { height: 27px; flex: none; display: flex; align-items: center; padding: 0 6px 0 15px; position: relative; }
.ts svg { width: 22px; height: 22px; }
.modes { display: flex; margin-left: 10px; border-radius: 3px; overflow: hidden; gap: 1px; }
.modes button { width: 20px; height: 20px; background: #545454; }
.modes .chosen { background: #4772b3; }
.modes svg { width: 16px; height: 16px; }
.hex { flex: 1; display: flex; align-items: center; gap: 3px; justify-content: center; padding-right: 115px; }
.hex .hx { width: 18px; height: 18px; }
.opt { background: #282828; border-radius: 4px; height: 20px; padding: 0 4px 0 7px; gap: 5px; }
.canvas { flex: 1; position: relative; min-height: 0; }
.scene3d { position: absolute; inset: 0; width: 100%; height: 100%; }
.wirel { fill: none; stroke-width: .8; }
.axis text { font: 700 11px Inter, sans-serif; fill: #111; text-anchor: middle; }
.vtext { position: absolute; left: 10px; top: 12px; display: flex; flex-direction: column; gap: 4px; color: #f4f4f4; text-shadow: 0 0 1px #000, 0 0 2px #000, 0 0 2px #333; }
.nav { position: absolute; right: 11px; top: 101px; display: flex; flex-direction: column; gap: 5px; }
.nav button { width: 28px; height: 28px; border-radius: 14px; background: rgba(30, 30, 30, .7); }
.nav .ico { width: 19px; height: 19px; }
.fold.ico { position: absolute; right: -3px; top: 18px; width: 14px; height: 14px; opacity: .7; }
.thumb { position: absolute; right: 1px; top: 32px; width: 3px; height: 24px; border-radius: 2px; background: #4a4a4a; }
.thumb.low { top: 136px; height: 260px; background: #3c3c3c; }

.nm { margin-right: 8px; }
.sbody { flex: 1; display: grid; grid-template-columns: 169px minmax(0, 1fr); min-height: 0; overflow: hidden; }
aside { padding: 0 7px; background: #2a2a2a; }
.geo { height: 12px; background: #4772b3; overflow: hidden; display: flex; align-items: center; gap: 10px; padding-left: 22px; margin-bottom: 2px; border-radius: 0 0 3px 3px; }
.dom { margin: -2px -7px 0; height: 32px; background: #303030; display: flex; align-items: center; gap: 6px; padding: 4px 9px 0; }
aside ul { padding-top: 6px; border-right: 2px solid #393939; margin-right: -5px; padding-right: 3px; }
aside li { height: 24px; display: flex; align-items: center; padding: 0 4px 0 3px; gap: 5px; line-height: 20px; }
aside li span { margin-left: 4px; }
aside li em { margin-left: auto; font-style: normal; color: #7a7a7a; }
aside li.sub { padding-left: 21px; margin-left: 15px; position: relative; border-left: 1px solid #444; }
aside li.picked { background: #4772b3; border: solid #2a2a2a; border-width: 2px 0; border-radius: 5px; margin-left: 0; padding-left: 37px; }
aside li.picked em { color: #a9bcdc; }
.hid { visibility: hidden; }
.sheet { position: relative; overflow: hidden; }
table { width: 100%; border-collapse: collapse; table-layout: fixed; }
th { height: 23px; padding: 0 0 1px; line-height: 18px; font-weight: 400; background: #303030; border-right: 1px solid #272727; border-bottom: 1px solid #222; }
th:first-child { width: 58px; }
th:nth-child(2) { width: 89px; text-align: left; padding-left: 8px; }
td { height: 22px; padding: 0 5px 0 0; text-align: right; background: #282828; border-right: 1px solid #222; }
td:nth-child(2) { text-align: center; padding: 0 6px 0 0; }
td:first-child { background: #2f2f2f; }
tr:nth-child(even) td { background: #2b2b2b; }
tr:nth-child(even) td:first-child { background: #323232; }
td input, .chk input { appearance: none; width: 12px; height: 12px; border: 1px solid #777; border-radius: 2px; vertical-align: middle; }
.spread footer { height: 28px; flex: none; display: flex; justify-content: flex-end; align-items: center; padding: 0 8px 0 0; background: #303030; gap: 11px; }
.bar { width: 1px; height: 13px; background: #ddd; }

.outl { height: 449px; flex: none; }
.outl .hd { padding: 0 6px 0 8px; }
.find { display: flex; align-items: center; gap: 6px; background: #1d1d1d; border-radius: 4px; height: 22px; width: 126px; padding-left: 4px; }
.find input { width: 90px; }
.find input::placeholder { color: #6a6a6a; }
.outl .find { margin-left: 59px; }
.outl .f { margin-left: auto; }
.outl .t { border-radius: 4px; }
.olwrap { flex: 1; overflow: hidden; background: #282828; position: relative; min-height: 0; }
.outl ul { margin-top: -8px; }
.outl li { height: 22px; display: flex; align-items: center; margin-left: 32px; padding: 0 11px 0 16px; border-left: 1px solid #585858; color: #c8c8c8; }
.outl li:nth-child(even) { background: #2b2b2b; }
.outl li .s { margin-right: 5px; }
.oi { width: 22px; height: 20px; display: grid; place-items: center; border-radius: 4px; color: #d08450; }
.outl .active .oi { background: #545454; }
.oname { margin: 0 24px 0 5px; }
.outl li > .ico + .ico { margin-left: 7px; }
.e-wrench { color: #7a85cf; }
.e-mesh, .e-sun, .e-camo { color: #22b57e; }
.outl li.root { border: 0; margin-left: 20px; padding-left: 7px; }
.root .e-camo { background: #545454; border-radius: 3px; width: 20px; height: 20px; }
.vis { margin-left: auto; display: flex; gap: 7px; color: #e8e8e8; }

.prop { flex: 1; }
.prop .hd { padding: 0 9px 0 9px; height: 23px; }
.prop .find { margin-left: 111px; }
.last { margin-left: auto; border-radius: 4px; }
.pb { flex: 1; display: grid; grid-template-columns: 30px minmax(0, 1fr); min-height: 0; }
.pt { background: #1d1d1d; padding: 10px 0 0 3px; }
.pt button { width: 27px; height: 30px; border-radius: 4px 0 0 4px; }
.pt .ico { width: 17px; height: 17px; }
.pt .g { margin-bottom: 7px; }
.pt .current { background: #303030; }
.pc { padding: 0 7px 0 10px; display: flex; flex-direction: column; min-width: 0; min-height: 0; }
.pcr { height: 36px; flex: none; display: flex; align-items: center; gap: 10px; padding-left: 2px; margin-top: 2px; }
.end { margin-left: auto; }
.addm { height: 21px; flex: none; margin: 10px 0 9px; background: #545454; border-radius: 4px; display: flex; padding-left: 4px; }
.addm span { flex: 1; text-align: center; }
.panel { flex: 1; min-height: 0; overflow: hidden; background: #3d3d3d; border: 1px solid #5468a8; border-bottom: 0; border-radius: 4px 4px 0 0; padding: 2px 8px 0 7px; margin-right: 2px; }
.mh { display: flex; height: 22px; align-items: center; gap: 4px; margin-bottom: 11px; }
.mh input { flex: 1; background: #1d1d1d; height: 20px; padding-left: 7px; margin: 0 -3px 0 6px; border-radius: 4px 0 0 4px; }
.mh .t, .mh .c { height: 20px; width: 22px; }
.mh .plain { width: 20px; }
.drag { width: 16px; height: 7px; margin-left: 6px; background: radial-gradient(#777 1px, transparent 1px) 0 0 / 4px 4px; margin-right: -5px; }
.nt2 { margin-bottom: 3px; }
.pr { display: flex; height: 27px; align-items: center; }
.pr label { flex: 1; text-align: right; padding-right: 10px; }
.pr input, .psel { width: 187px; height: 20px; background: #545454; border-radius: 3px; text-align: center; flex: none; }
.pr .plain { width: 22px; }
.pr .plain .ico { width: 18px; height: 18px; }
.ph { width: 22px; }
.psel { display: flex; align-items: center; background: #282828; padding: 0 1px 0 8px; }
.psel select { flex: 1; }
.pr input[type=color] { appearance: none; background: none; overflow: hidden; }
.pr input::-webkit-color-swatch-wrapper { padding: 0; }
.pr input::-webkit-color-swatch { border: 0; }
.dot { width: 4px; height: 4px; border-radius: 2px; background: #ddd; margin: 0 7px 0 10px; }
.pr.muted { color: #7d7d7d; }
.pr.muted input { background: #474747; }
.pr.muted .plain, .pr.muted .dot { opacity: .2; }
.subp { height: 26px; gap: 4px; padding-left: 2px; }

.nodeed { background: #1d1d1d; }
.nodeed .hd { height: 24px; position: relative; }
.nodeed .dd, .nodeed .sel { background: #1f1f1f; border-color: #303030; }
.mini .hd { padding-right: 0; }
.grow { flex: 1; border-radius: 4px 0 0 4px; }
.main .hd { gap: 6px; padding: 0 8px 0 11px; }
.modi { width: 72px; padding-left: 6px; }
.main .menus { margin-left: 7px; }
.tree { width: 211px; margin-left: 248px; }
.nodeed .tree .dd { width: 34px; min-width: 0; }
.tree input { padding-left: 6px; }
.main .hd > .dimi { margin-left: 4px; }
.main .rightg .t { border-radius: 4px; }
.main .rightg .grp .t { border-radius: 0; }
.crumb { position: relative; height: 50px; display: flex; align-items: center; gap: 11px; padding-right: 2px; text-shadow: 0 1px 2px #000; }
.main .crumb { gap: 10px; padding-left: 1px; }
.mini .crumb { gap: 9px; overflow: hidden; }
.crumb .s { margin: 0 -3px 0 -4px; }
.main .crumb .s:first-child { margin: 0 1px 0 -3px; }
.main .crumb .end { margin: 0 -4px 0 auto; }
.mini .crumb .s:last-child { margin: 0 -4px 0 auto; }
.space { position: absolute; inset: 26px 0 0; overflow: hidden; }
.space > * { translate: 0 -27px; }
.links { position: absolute; left: 0; top: 0; width: 100%; height: calc(100% + 27px); }
.vbar { position: absolute; right: 1px; top: 190px; bottom: 12px; width: 4px; background: #2c2c2c; border-radius: 2px; }
.vbar.short { top: 66px; bottom: auto; height: 74px; }
.hbar { position: absolute; left: 28px; bottom: 1px; width: 32px; height: 3px; background: #3a3a3a; border-radius: 2px; }
.node { position: absolute; background: #303030; border-radius: 3px; box-shadow: 0 1px 4px #000; font-size: 6px; line-height: 10px; padding-bottom: 2px; color: #ddd; }
.node.active { outline: 1px solid #fff; }
.mini .nr { height: 11px; }
.ms { position: absolute; bottom: 100%; left: 0; right: 2px; height: 12px; background: #262626; display: flex; align-items: center; gap: 5px; padding-left: 3px; }
.node .ico { width: 7px; height: 7px; }
.nh { height: 10px; display: flex; align-items: center; gap: 2px; padding: 0 3px; border-radius: 3px 3px 0 0; margin-bottom: 2px; white-space: nowrap; }
.gb { margin-left: auto; display: flex; align-items: center; }
.gb i { font-style: normal; }
.nr { position: relative; height: 12px; display: flex; align-items: center; padding: 0 6px; white-space: nowrap; }
.nr.out { justify-content: flex-end; }
.sk { position: absolute; left: -2px; width: 4px; height: 4px; border-radius: 2px; }
.out .sk { left: auto; right: -3px; }
.nr.pick { height: 13px; }
.nr.pick select { flex: 1; height: 10px; background: #282828; border: 1px solid #3b3b3b; padding-left: 3px; border-radius: 2px; line-height: 8px; }
.nc { position: absolute; right: 8px; }
.nf { flex: 1; height: 10px; background: #545454; border-radius: 2px; padding: 0 7px; justify-content: space-between; }
.nf.mid { justify-content: center; border-radius: 0; }
.nr.vec { height: 11px; }
.nt { flex: 1; width: 100%; height: 10px; background: #1d1d1d; border: 1px solid #444; padding-left: 2px; border-radius: 2px; }
.nr.group { height: 13px; gap: 2px; }
.gn { flex: 1; background: #1d1d1d; padding-left: 3px; height: 10px; }
.gu { background: #545454; width: 12px; text-align: center; height: 10px; }
.gs { background: #545454; }
.gs.lit { background: #4772b3; color: #fff; }
.chk label { display: flex; align-items: center; gap: 3px; }
.chk input { width: 7px; height: 7px; background: #545454; border: 0; }
.dim { color: #777; }
.dim .nf { background: #3c3c3c; }

.tl { height: 27px; flex: none; flex-direction: row; align-items: center; padding: 0 18px 0 8px; }
.tl .dd { background: none; border: 0; margin-right: 15px; }
.tl .plain { margin-right: 13px; gap: 4px; }
.play { display: flex; margin-left: auto; padding-right: 200px; color: #ccc; gap: 4px; }
.play button:first-child { margin-right: 16px; }
.play .ico { width: 14px; height: 14px; }
.tl input { background: #4a4a4a; text-align: center; }
.fr { width: 76px; height: 21px; border-radius: 4px; margin-right: 10px; }
.rng { display: flex; align-items: center; background: #4a4a4a; height: 21px; width: 92px; padding-left: 20px; margin-left: 6px; border-radius: 4px 0 0 4px; }
.rng.e { margin-left: 1px; border-radius: 0 4px 4px 0; }
.rng input { width: 46px; }
.br { width: 36px; height: 21px; background: #4a4a4a; border-radius: 4px; margin-left: 7px; }
.b1 { margin-left: 112px; }
.status { height: 24px; flex: none; display: flex; align-items: center; gap: 13px; padding: 0 14px 0 8px; color: #9b9b9b; }
.status span { display: flex; align-items: center; gap: 4px; }
.status .mem { margin-left: auto; }
.mark { position: absolute; left: 10px; bottom: 8px; display: flex; align-items: center; gap: 10px; font: 700 34px/42px Inter, sans-serif; color: rgba(255, 255, 255, .24); pointer-events: none; }
.mark svg { width: 40px; height: 42px; }
.keys { position: absolute; left: 34px; bottom: 164px; font: 500 20px/24px Inter, sans-serif; color: #fff; pointer-events: none; }
.keys p { text-shadow: 0 0 2px #000; }
.keys svg { width: 35px; height: 45px; display: block; margin-top: 9px; }
.subtitle { position: absolute; left: 0; right: 4px; bottom: 7px; text-align: center; font: 500 56px/72px "Noto Sans CJK SC", sans-serif; color: #fff; text-shadow: 0 0 3px #000, 1px 1px 2px #000, -1px -1px 1px #000; pointer-events: none; white-space: nowrap; }
</style>
